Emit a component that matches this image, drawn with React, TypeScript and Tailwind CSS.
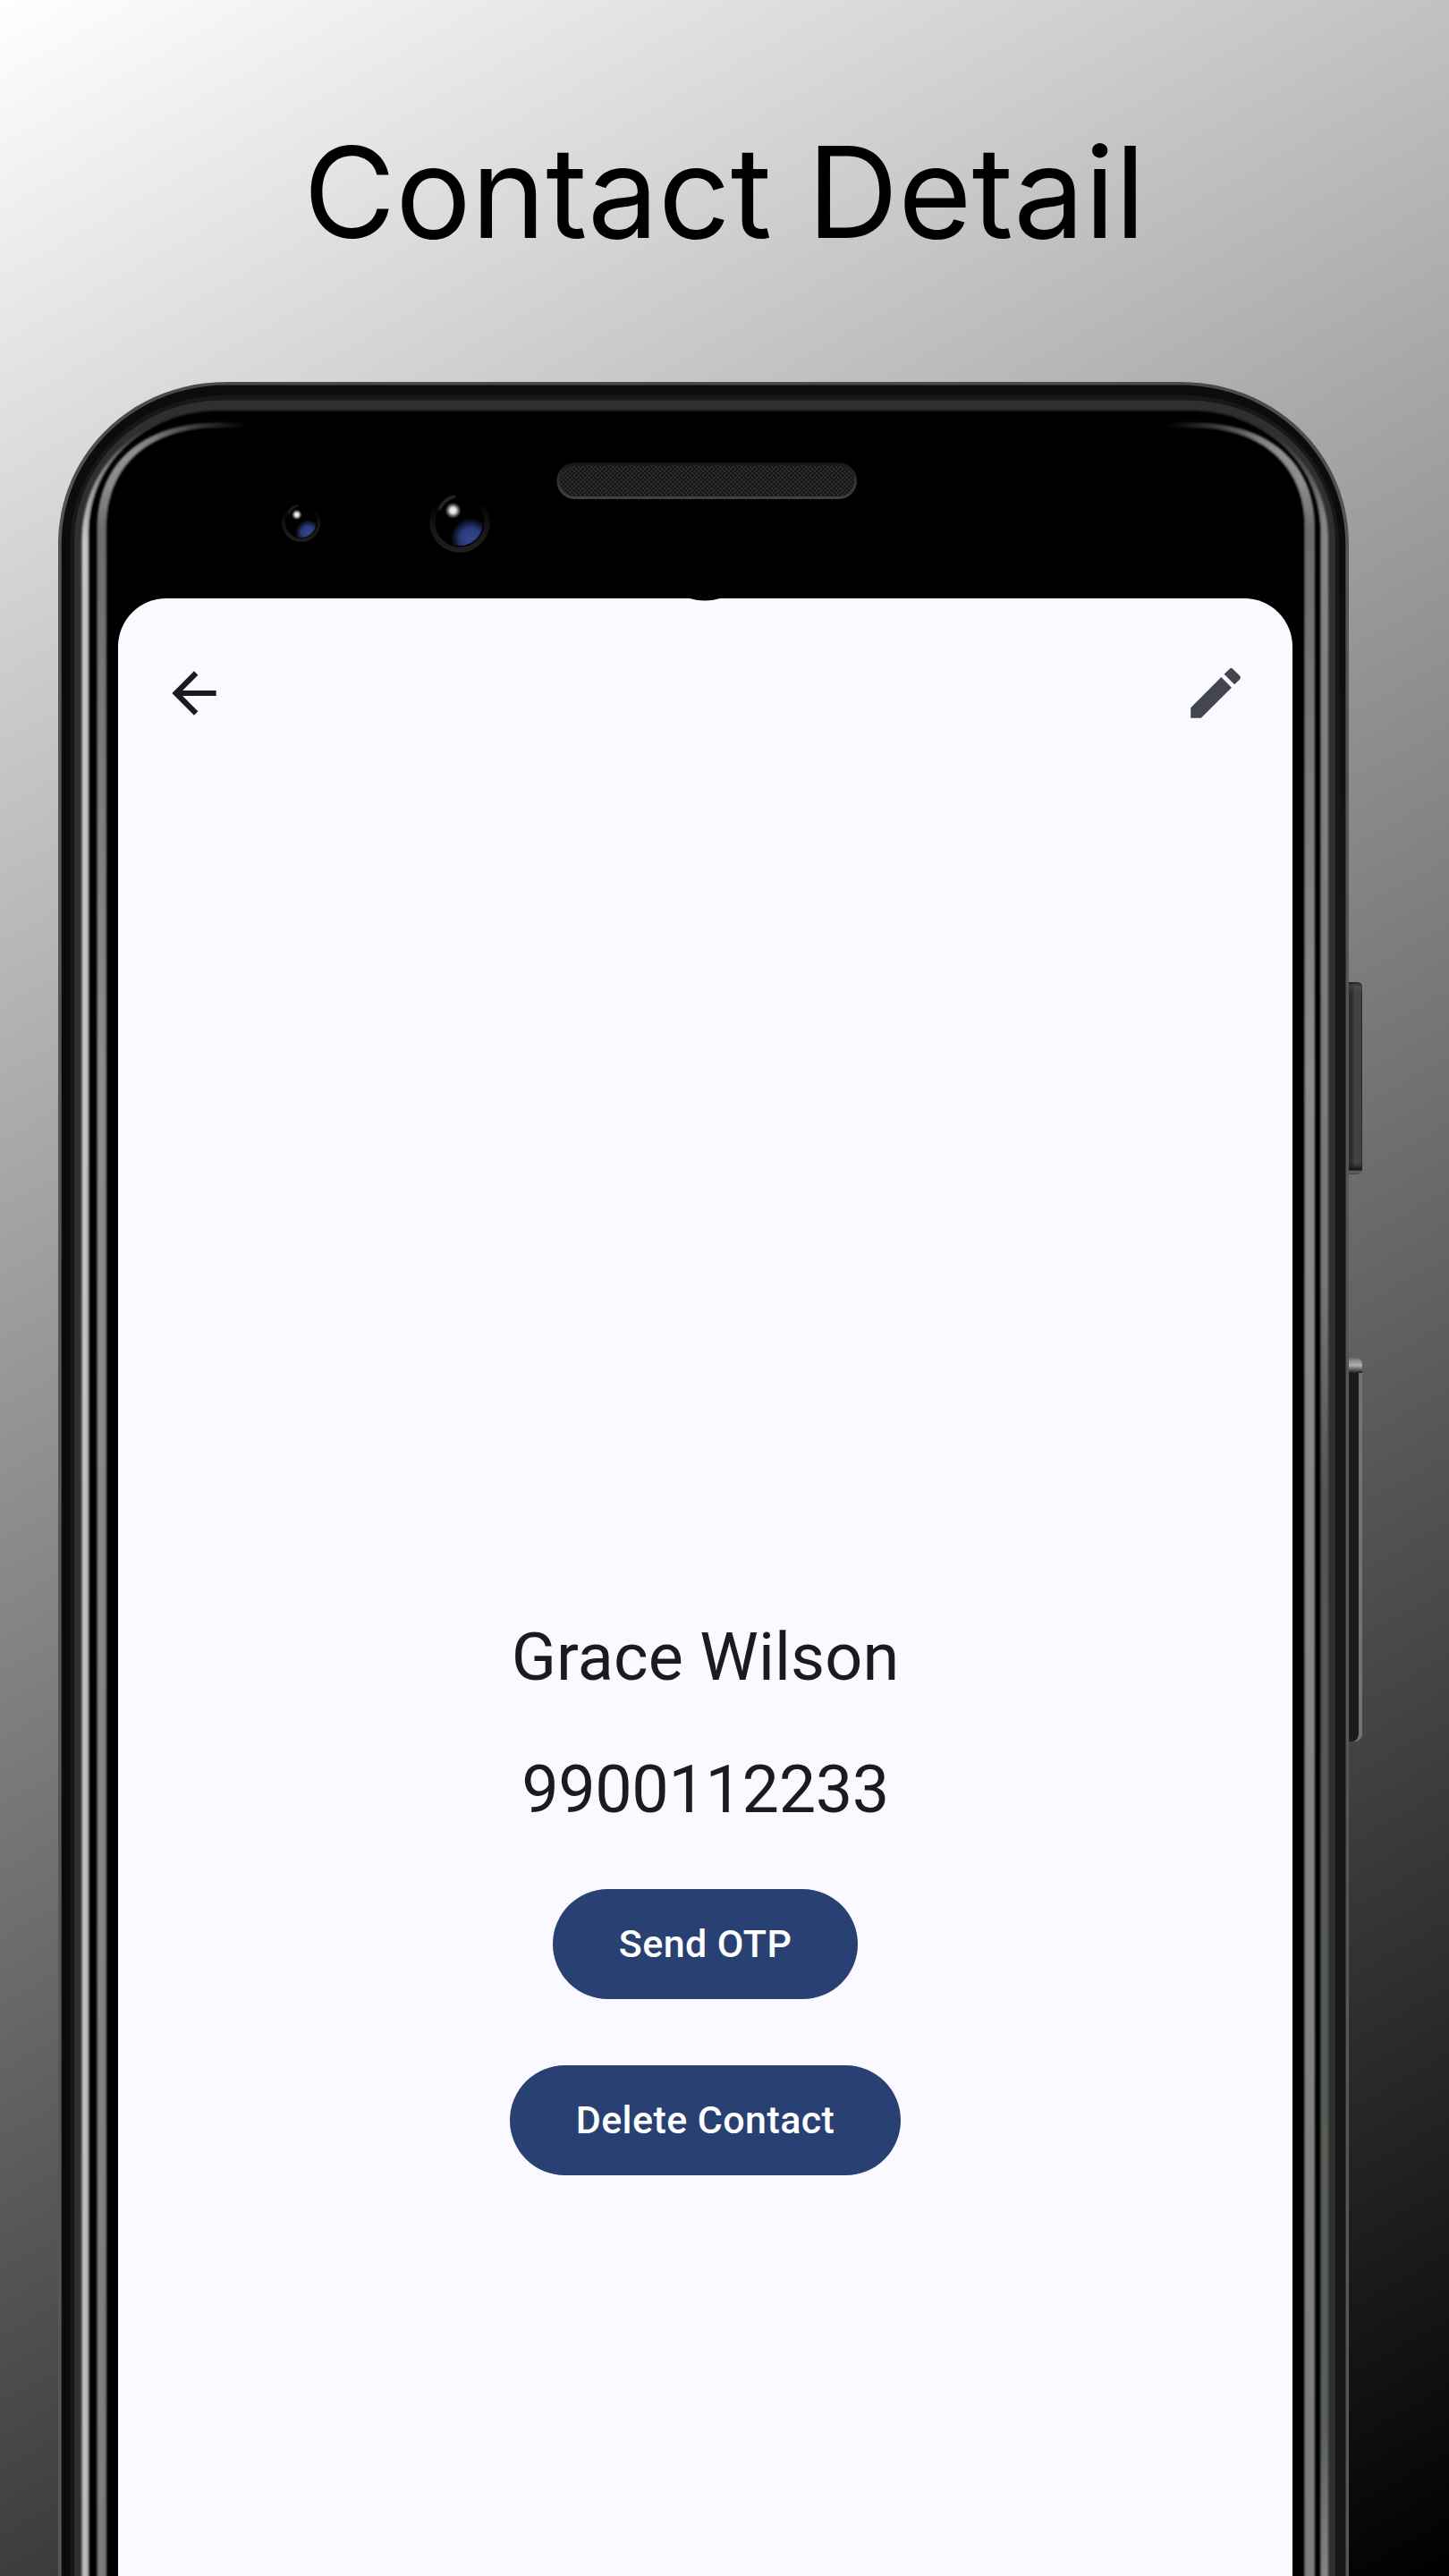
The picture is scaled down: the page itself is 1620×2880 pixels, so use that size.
import React from "react";
import { MdArrowBack, MdEdit } from "react-icons/md";

type Shape = { l: number; t: number; r: number; rx: number; ry: number; k?: number };

// Outline of one nested layer of the phone body, open past the bottom edge.
function outline({ l, t, r, rx, ry, k = 0.56 }: Shape) {
  const a = rx * (1 - k);
  const b = ry * (1 - k);
  return `M${l} 2900 V${t + ry} C${l} ${t + b} ${l + a} ${t} ${l + rx} ${t} H${r - rx} C${r - a} ${t} ${r} ${t + b} ${r} ${t + ry} V2900 Z`;
}

function Camera({ cx, cy, r, id }: { cx: number; cy: number; r: number; id: string }) {
  return (
    <g>
      <circle cx={cx} cy={cy} r={r * 0.9} fill="none" stroke="url(#lensRing)" strokeWidth={r * 0.18} />
      <path
        d={`M${cx - r * 0.68} ${cy - r * 0.42} Q${cx - r * 0.5} ${cy - r * 0.78} ${cx - r * 0.15} ${cy - r * 0.86}`}
        fill="none"
        stroke="#3a3a3a"
        strokeWidth={r * 0.07}
        filter="url(#soft)"
      />
      <clipPath id={id}>
        <circle cx={cx} cy={cy} r={r * 0.77} />
      </clipPath>
      <g clipPath={`url(#${id})`}>
        <circle cx={cx + r * 0.36} cy={cy + r * 0.52} r={r * 0.66} fill="url(#lensBlue)" />
      </g>
      <circle cx={cx - r * 0.22} cy={cy - r * 0.39} r={r * 0.27} fill="url(#glint)" />
    </g>
  );
}

function PhoneBody() {
  return (
    <svg className="absolute inset-0" width="1620" height="2880" viewBox="0 0 1620 2880" aria-hidden="true">
      <defs>
        <filter id="soft" x="-5%" y="-5%" width="110%" height="110%">
          <feGaussianBlur stdDeviation="0.9" />
        </filter>
        <linearGradient id="edge" gradientUnits="userSpaceOnUse" x1="0" y1="427" x2="0" y2="620">
          <stop offset="0" stopColor="#4a4a4a" />
          <stop offset="1" stopColor="#565656" />
        </linearGradient>
        <linearGradient id="sideShade" gradientUnits="userSpaceOnUse" x1="0" y1="620" x2="0" y2="1060">
          <stop offset="0" stopColor="#171717" stopOpacity="0" />
          <stop offset="1" stopColor="#171717" />
        </linearGradient>
        <linearGradient id="rimLeft" gradientUnits="userSpaceOnUse" x1="0" y1="460" x2="0" y2="2880">
          <stop offset="0" stopColor="#222" />
          <stop offset="0.025" stopColor="#888" />
          <stop offset="0.06" stopColor="#c6c6c6" />
          <stop offset="1" stopColor="#bcbcbc" />
        </linearGradient>
        <linearGradient id="rimRight" gradientUnits="userSpaceOnUse" x1="0" y1="460" x2="0" y2="2880">
          <stop offset="0" stopColor="#222" />
          <stop offset="0.025" stopColor="#555" />
          <stop offset="0.05" stopColor="#858585" />
          <stop offset="0.4" stopColor="#787878" />
          <stop offset="0.5" stopColor="#535752" />
          <stop offset="0.93" stopColor="#5a605a" />
          <stop offset="1" stopColor="#858585" />
        </linearGradient>
        <linearGradient id="glow" gradientUnits="userSpaceOnUse" x1="0" y1="470" x2="0" y2="2880">
          <stop offset="0" stopColor="#666" />
          <stop offset="0.015" stopColor="#909090" />
          <stop offset="0.03" stopColor="#8c8c8c" />
          <stop offset="0.05" stopColor="#6c6c6c" />
          <stop offset="0.3" stopColor="#8c8c8c" />
          <stop offset="1" stopColor="#7c7c7c" />
        </linearGradient>
        <linearGradient id="fade" gradientUnits="userSpaceOnUse" x1="65" y1="0" x2="1508" y2="0">
          <stop offset="0" stopColor="#fff" />
          <stop offset="0.075" stopColor="#fff" />
          <stop offset="0.146" stopColor="#000" />
          <stop offset="0.858" stopColor="#000" />
          <stop offset="0.93" stopColor="#fff" />
          <stop offset="1" stopColor="#fff" />
        </linearGradient>
        <mask id="corners" maskUnits="userSpaceOnUse" x="0" y="0" width="1620" height="2880">
          <rect width="1620" height="2880" fill="url(#fade)" />
        </mask>
        <pattern id="mesh" width="4.8" height="4.8" patternUnits="userSpaceOnUse">
          <rect width="4.8" height="4.8" fill="#121212" />
          <circle cx="1.2" cy="1.2" r="1.25" fill="#343434" />
          <circle cx="3.6" cy="3.6" r="1.25" fill="#343434" />
        </pattern>
        <linearGradient id="speakerRim" x1="0" y1="0" x2="0" y2="1">
          <stop offset="0" stopColor="#161616" />
          <stop offset="0.5" stopColor="#333" />
          <stop offset="1" stopColor="#4a4a4a" />
        </linearGradient>
        <linearGradient id="lensRing" x1="0" y1="0" x2="0" y2="1">
          <stop offset="0.15" stopColor="#000" />
          <stop offset="0.5" stopColor="#111" />
          <stop offset="1" stopColor="#1e1e20" />
        </linearGradient>
        <radialGradient id="lensBlue">
          <stop offset="0" stopColor="#334788" />
          <stop offset="0.5" stopColor="#2b3b7c" />
          <stop offset="1" stopColor="#2b3b7c" stopOpacity="0" />
        </radialGradient>
        <radialGradient id="glint">
          <stop offset="0" stopColor="#fff" />
          <stop offset="0.4" stopColor="#d0d0d0" />
          <stop offset="1" stopColor="#888" stopOpacity="0" />
        </radialGradient>
        <linearGradient id="powerX" x1="0" y1="0" x2="1" y2="0">
          <stop offset="0" stopColor="#2a2a2a" />
          <stop offset="0.35" stopColor="#303030" />
          <stop offset="0.5" stopColor="#434343" />
          <stop offset="0.85" stopColor="#434343" />
          <stop offset="1" stopColor="#2c2c2c" />
        </linearGradient>
        <linearGradient id="powerY" x1="0" y1="0" x2="0" y2="1">
          <stop offset="0" stopColor="#111" stopOpacity="0.7" />
          <stop offset="0.025" stopColor="#555" stopOpacity="0.4" />
          <stop offset="0.06" stopColor="#444" stopOpacity="0" />
          <stop offset="0.94" stopColor="#222" stopOpacity="0" />
          <stop offset="0.975" stopColor="#111" stopOpacity="0.9" />
          <stop offset="0.985" stopColor="#666" />
          <stop offset="1" stopColor="#444" />
        </linearGradient>
        <linearGradient id="volumeTop" x1="0" y1="0" x2="0" y2="1">
          <stop offset="0" stopColor="#666" />
          <stop offset="0.18" stopColor="#8a8a8a" />
          <stop offset="0.5" stopColor="#b0b0b0" />
          <stop offset="1" stopColor="#1c1c1c" />
        </linearGradient>
      </defs>

      <path d="M1506 1098 H1517 Q1523 1098 1523 1104 V1306 Q1523 1312 1516 1313 H1506 Z" fill="url(#powerX)" />
      <path d="M1506 1098 H1517 Q1523 1098 1523 1104 V1306 Q1523 1312 1516 1313 H1506 Z" fill="url(#powerY)" />
      <path d="M1506 1518 H1517 Q1523 1520 1523 1526 V1938 Q1523 1945 1516 1947 H1506 Z" fill="#737373" />
      <path d="M1506 1520 H1519 V1938 Q1519 1945 1513 1947 H1506 Z" fill="#1c1c1c" />
      <path d="M1506 1520 L1517 1518 Q1523 1520 1523 1526 V1535 H1506 Z" fill="url(#volumeTop)" />

      <path d={outline({ l: 65, t: 427, r: 1508, rx: 188, ry: 182 })} fill="url(#edge)" />
      <path d={outline({ l: 68.7, t: 430.5, r: 1504.3, rx: 185, ry: 179 })} fill="#0c0c0c" />
      <path d="M1493 620 H1504.3 V2900 H1493 Z" fill="url(#sideShade)" />
      <path d={outline({ l: 78.5, t: 442, r: 1497, rx: 172, ry: 167 })} fill="#181818" />
      <path d={outline({ l: 83, t: 447.5, r: 1493, rx: 166, ry: 160 })} fill="#2f2f2f" />
      <g filter="url(#soft)">
        <clipPath id="leftHalf">
          <rect x="0" y="0" width="786" height="2900" />
        </clipPath>
        <clipPath id="rightHalf">
          <rect x="786" y="0" width="834" height="2900" />
        </clipPath>
        <path d={outline({ l: 91.5, t: 459, r: 1485, rx: 158, ry: 145, k: 0.58 })} fill="url(#rimLeft)" clipPath="url(#leftHalf)" />
        <path d={outline({ l: 91.5, t: 459, r: 1485, rx: 158, ry: 145, k: 0.58 })} fill="url(#rimRight)" clipPath="url(#rightHalf)" />
        <path d={outline({ l: 98.7, t: 459, r: 1477, rx: 150, ry: 138, k: 0.58 })} fill="#000" />
      </g>
      <g mask="url(#corners)">
        <g filter="url(#soft)">
          <path d={outline({ l: 108.5, t: 472.5, r: 1470, rx: 135, ry: 118, k: 0.62 })} fill="url(#glow)" />
          <path d={outline({ l: 118.5, t: 477.5, r: 1459, rx: 126, ry: 112, k: 0.62 })} fill="#000" />
        </g>
      </g>

      <rect x="622.5" y="517.5" width="335.5" height="40" rx="20" fill="url(#mesh)" />
      <rect x="624" y="519" width="332.5" height="37.5" rx="18.7" fill="none" stroke="url(#speakerRim)" strokeWidth="3" strokeOpacity="0.8" />
      <Camera cx={336.7} cy={584} r={22} id="lensSmall" />
      <Camera cx={514} cy={584} r={34} id="lensLarge" />
    </svg>
  );
}

export default function App() {
  return (
    <div className="relative flex h-[2880px] w-[1620px] flex-col overflow-hidden bg-[linear-gradient(150.642deg,#fff_0%,#000_100%)]">
      <PhoneBody />
      <header className="relative flex h-[427px] shrink-0 items-center justify-center pt-[2px]">
        <h1 className="font-['Inter',sans-serif] text-[141px] leading-[170px] font-normal whitespace-nowrap text-black">
          Contact Detail
        </h1>
      </header>
      <main className="relative mt-[242px] ml-[132px] flex h-[2211px] w-[1313px] flex-col rounded-t-[54px] bg-[#f9f9ff] font-['Roboto',sans-serif] text-[#1a1b20]">
        <svg className="absolute top-0 left-[639px]" width="34" height="4" viewBox="0 0 34 4" aria-hidden="true">
          <path d="M0 0 Q17 5 34 0 Z" fill="#000" />
        </svg>
        <nav className="mt-[69px] flex h-[74px] items-center justify-between pr-[49px] pl-[48px]">
          <button aria-label="Back">
            <MdArrowBack size={74} color="#1a1b20" />
          </button>
          <button aria-label="Edit">
            <MdEdit size={74} color="#43464f" />
          </button>
        </nav>
        <section className="mt-[992px] flex flex-col items-center">
          <p className="text-[73.8px] leading-[98px] tracking-[0.1px]">Grace Wilson</p>
          <p className="mt-[50px] text-[73.8px] leading-[98px] tracking-[-0.4px]">9900112233</p>
          <button className="mt-[61.5px] h-[123px] rounded-full bg-[#294172] px-[74px] text-[43px] leading-[62px] font-medium tracking-[0.42px] text-white">
            Send OTP
          </button>
          <button className="mt-[74px] h-[123px] rounded-full bg-[#294172] px-[74px] text-[43px] leading-[62px] font-medium tracking-[0.42px] text-white">
            Delete Contact
          </button>
        </section>
      </main>
    </div>
  );
}
